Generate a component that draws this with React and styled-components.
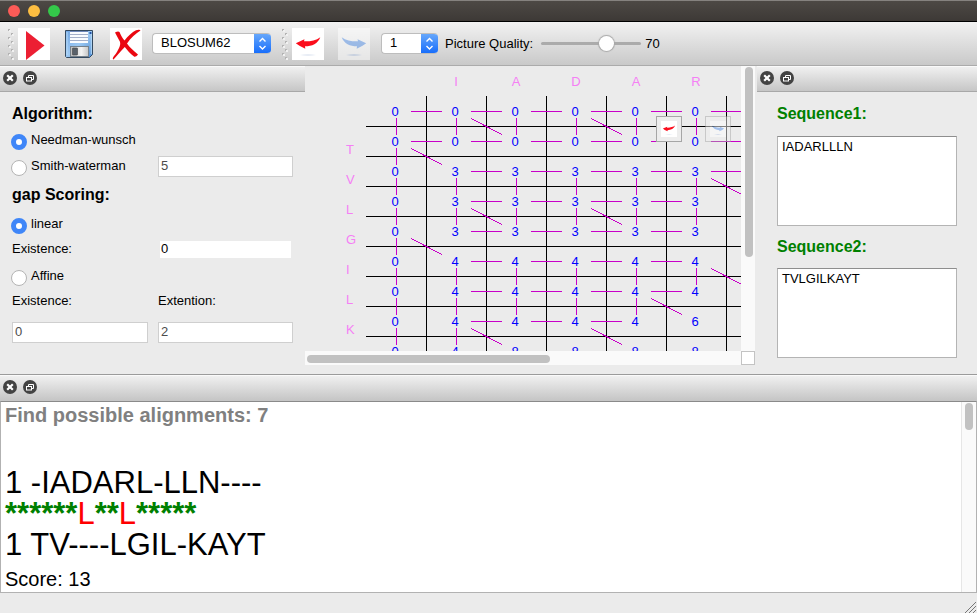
import React from "react";
import styled, { createGlobalStyle, css } from "styled-components";

const Global = createGlobalStyle`
  * { box-sizing: border-box; }
  body {
    margin: 0;
    background: #ebebeb;
    color: #000;
    font: 13px/16px "Liberation Sans", Arial, Helvetica, sans-serif;
  }
  button, input, select, textarea { font: inherit; color: inherit; margin: 0; }
  h2, p { margin: 0; }
`;

const Window = styled.div`
  display: flex;
  flex-direction: column;
  min-height: 100vh;
`;

/* ---------- title bar and toolbar ---------- */

const TitleBar = styled.header`
  flex: none;
  display: flex;
  align-items: center;
  gap: 8px;
  height: 22px;
  padding: 0 8px;
  background: linear-gradient(#4d4945, #3d3936);
  border-top: 1px solid #85827f;
  border-bottom: 1px solid #000;
`;

const TrafficLight = styled.button`
  width: 12px;
  height: 12px;
  padding: 0;
  border: 0;
  border-radius: 50%;
  background: ${(p) => p.$color};
`;

const Toolbar = styled.div`
  flex: none;
  display: flex;
  align-items: center;
  height: 44px;
  padding: 0 8px;
  background: linear-gradient(#f2f2f2, #c9c9c9);
  border-bottom: 1px solid #ababab;
`;

const ToolGroup = styled.div`
  display: flex;
  align-items: center;
  gap: ${(p) => p.$gap}px;
  margin-right: ${(p) => p.$after || 0}px;
`;

const ToolButton = styled.button`
  display: block;
  width: 32px;
  height: 32px;
  padding: 0;
  border: 0;
  background: ${(p) => (p.$plain ? "transparent" : "#fff")};
  &:disabled { opacity: 0.5; }
  svg { display: block; width: 100%; height: 100%; }
`;

const GripIcon = styled.svg`
  flex: none;
  display: block;
  margin-right: 4px;
`;

const SelectBox = styled.div`
  display: flex;
  width: ${(p) => p.$width}px;
  height: 21px;
  border-radius: 4px;
  background: #fff;
  border: 1px solid #bdbdbd;
  border-right: 0;
  overflow: hidden;
  position: relative;
  margin-right: ${(p) => p.$after}px;
  select {
    appearance: none;
    width: 100%;
    border: 0;
    outline: 0;
    background: transparent;
    padding: 0 20px 2px 8px;
    line-height: 16px;
  }
  svg {
    position: absolute;
    right: 0;
    top: -1px;
    pointer-events: none;
  }
`;

const Quality = styled.label`
  display: flex;
  align-items: center;
  gap: 8px;
  white-space: nowrap;
`;

const Slider = styled.input`
  appearance: none;
  width: 100px;
  height: 18px;
  background: transparent;
  &::-webkit-slider-runnable-track {
    height: 3px;
    border-radius: 2px;
    background: #ababab;
  }
  &::-webkit-slider-thumb {
    appearance: none;
    width: 15px;
    height: 15px;
    margin-top: -6px;
    border-radius: 50%;
    background: #fff;
    box-shadow: 0 0 1px 1px #a8a8a8;
  }
`;

const QualityValue = styled.output`
  margin-left: 4px;
`;

/* ---------- docks ---------- */

const Workspace = styled.main`
  flex: none;
  display: grid;
  grid-template-columns: 305px minmax(0, 1fr) 220px;
`;

const Dock = styled.section`
  min-width: 0;
`;

const DockBar = styled.div`
  display: flex;
  align-items: center;
  gap: 6px;
  height: 26px;
  padding: 0 3px 2px;
  background: linear-gradient(#f0f0f0, #c6c6c6);
  border-top: 1px solid #fafafa;
  border-bottom: 1px solid ${(p) => (p.$flush ? "#c6c6c6" : "#a8a8a8")};
`;

const DockButton = styled.button`
  width: 14px;
  height: 14px;
  padding: 0;
  border: 0;
  background: transparent;
  svg { display: block; }
`;

const Heading = styled.h2`
  font-size: 16px;
  line-height: 20px;
  font-weight: bold;
`;

const Options = styled.form`
  display: grid;
  grid-template-columns: 136px 135px;
  grid-template-rows: 24px 28px 24px 34px 24px 26px 28px 22px 40px;
  column-gap: 10px;
  align-items: center;
  padding: 10px 12px;
  ${Heading} { grid-column: 1 / -1; }
`;

const Choice = styled.label`
  grid-column: ${(p) => (p.$wide ? "1 / -1" : "auto")};
  display: flex;
  align-items: center;
  gap: 4px;
  margin-left: -1px;
  white-space: nowrap;
`;

const Radio = styled.input`
  appearance: none;
  flex: none;
  width: 16px;
  height: 16px;
  border-radius: 50%;
  border: 1px solid #b4b4b4;
  background: #fff;
  && { margin-top: 4px; }
  &:checked {
    border: 5px solid #3f86f8;
  }
`;

const TextBox = styled.input`
  width: 100%;
  height: 21px;
  padding: 0 2px 2px;
  border: 1px solid #cfcfcf;
  border-radius: 0;
  background: #fff;
  outline: 0;
  &:disabled { color: #4c4c4c; }
  ${(p) =>
    p.$frameless &&
    css`
      border: 0;
      height: 17px;
      width: 131px;
      margin-left: 2px;
      padding: 0 1px 1px;
    `}
`;

const Sequences = styled.div`
  display: grid;
  grid-template-rows: 44px 90px 42px 90px;
  align-items: center;
  padding: 0 20px 16px;
`;

const SequenceLabel = styled.label`
  font-size: 16px;
  line-height: 20px;
  font-weight: bold;
  color: #008000;
`;

const SequenceText = styled.textarea`
  display: block;
  width: 100%;
  height: 90px;
  padding: 2px 4px;
  border: 1px solid #b4b4b4;
  border-top-color: #8e8e8e;
  border-radius: 0;
  resize: none;
  outline: 0;
  background: #fff;
`;

/* ---------- matrix view ---------- */

const MatrixArea = styled.section`
  position: relative;
  display: grid;
  grid-template-columns: minmax(0, 1fr) 14px;
  grid-template-rows: minmax(0, 1fr) 14px;
  padding: 0 2px 9px 0;
`;

const MatrixView = styled.div`
  min-width: 0;
  min-height: 0;
  overflow: hidden;
  contain: size;
  svg { display: block; }
`;

const ScrollTrack = styled.div`
  background: #fafafa;
  padding: ${(p) => (p.$vertical ? "1px 2px 0 4px" : "4px 0 2px 2px")};
`;

const ScrollThumb = styled.div`
  border-radius: 4px;
  background: #c1c1c1;
  width: ${(p) => (p.$vertical ? "8px" : p.$length)};
  height: ${(p) => (p.$vertical ? p.$length : "8px")};
`;

const ScrollCorner = styled.div`
  background: #fff;
  border: 1px solid #c3c3c3;
`;

const FloatingTools = styled.div`
  position: absolute;
  top: 50px;
  right: 26px;
  display: flex;
  gap: 23px;
`;

const FloatingButton = styled.button`
  width: 26px;
  height: 26px;
  padding: 4px;
  border: 1px solid #a6a6a6;
  background: #ededed;
  &:disabled { opacity: 0.5; }
  svg { display: block; width: 16px; height: 16px; background: #fff; }
`;

const GridLines = styled.g`
  stroke: #000;
  shape-rendering: crispEdges;
`;

const Links = styled.g`
  stroke: #c800c8;
  shape-rendering: crispEdges;
`;

const Score = styled.text`
  fill: #0000ff;
  font-size: 13px;
  text-anchor: middle;
`;

const Residue = styled.text`
  fill: #f57ff5;
  font-size: 13px;
  text-anchor: ${(p) => (p.$centered ? "middle" : "start")};
`;

/* ---------- results ---------- */

const Results = styled.section`
  flex: 1;
  display: flex;
  flex-direction: column;
  border-top: 1px solid #9b9b9b;
`;

const Log = styled.div`
  flex: 1;
  display: flex;
  border: 1px solid #b2b2b2;
  border-top-color: #8a8a8a;
  background: #fff;
`;

const LogText = styled.div`
  flex: 1;
  padding-left: 4px;
`;

const LogTitle = styled.h2`
  font-size: 20px;
  line-height: 26px;
  color: #808080;
  margin-bottom: 39px;
`;

const Alignment = styled.p`
  font-size: 31px;
  line-height: 31px;
  white-space: pre;
`;

const Gap = styled.b`
  color: #008000;
`;

const Match = styled.span`
  color: #f00;
`;

const ScoreLine = styled.p`
  margin-top: 6px;
  font-size: 20px;
  line-height: 26px;
`;

const LogScroll = styled.div`
  width: 15px;
  padding: 1px 3px;
  background: #fafafa;
  border-left: 1px solid #e6e6e6;
`;

const StatusBar = styled.footer`
  flex: none;
  display: flex;
  justify-content: flex-end;
  align-items: flex-end;
  height: 20px;
  svg { display: block; }
`;

/* ---------- icons ---------- */

const Grip = () => (
  <GripIcon width="6" height="32" aria-hidden="true">
    {[1, 5, 9, 13, 17, 21, 25, 29].map((y, i) => (
      <g key={y}>
        <rect x={i % 2 ? 3 : 0} y={y} width="2" height="2" fill="#b3b3b3" />
        <rect x={i % 2 ? 4 : 1} y={y + 1} width="2" height="2" fill="#f1f1f1" />
      </g>
    ))}
  </GripIcon>
);

const PlayIcon = () => (
  <svg viewBox="0 0 32 32" aria-hidden="true">
    <path d="M8 3 26.500 17.500 8 32Z" fill="#ec1f33" />
  </svg>
);

const SaveIcon = () => (
  <svg viewBox="0 0 32 32" aria-hidden="true">
    <defs>
      <linearGradient id="disk" x1="0" y1="0" x2="1" y2="1">
        <stop offset="0" stopColor="#6fa5e4" />
        <stop offset=".5" stopColor="#9cc8f2" />
        <stop offset="1" stopColor="#4a8ad3" />
      </linearGradient>
      <linearGradient id="shutter" x1="0" y1="0" x2="1" y2="0">
        <stop offset="0" stopColor="#bdbdbd" />
        <stop offset=".6" stopColor="#f4f4f4" />
        <stop offset="1" stopColor="#c6c6c6" />
      </linearGradient>
    </defs>
    <path d="M1.500 2.500h27v24l-3 3h-23l-1-1Z" fill="url(#disk)" stroke="#34495f" />
    <path d="M3 4v23M27.300 4v22" stroke="#b9dcf8" />
    <rect x="6" y="3" width="18" height="12" fill="#fafcff" />
    <path d="M6 6.500h18M6 9.500h18M6 12.500h18" stroke="#a5b0ca" />
    <path d="M6 3.500h18" stroke="#7189bb" />
    <rect x="6.500" y="18.500" width="18" height="10" fill="url(#shutter)" stroke="#75818c" />
    <rect x="8.500" y="20" width="5" height="7" rx=".5" fill="#59616a" stroke="#444" strokeWidth=".6" />
    <rect x="25.500" y="4" width="2" height="2" fill="#2352a5" />
  </svg>
);

const DeleteIcon = () => (
  <svg viewBox="0 0 32 32" aria-hidden="true">
    <path
      d="M5 4.500C7 3.500 8.500 3 9.500 4 11 7.500 12.500 10.500 14.500 12.500 18 8 22 4 26 2.200 28 1.400 30 1.400 30.500 2.500 26 5.500 20.500 10 17 15.500 19.500 19 23 22.500 28 26.500 26.500 28.500 25 29 24 28.500 20 25.500 17.500 22.500 14.800 19 11 23 7 27.500 3.500 31.500 2.200 30.600 2.600 29.800 6 25.500 9 20.500 12 15.500 9 12 6.500 8.500 5 4.500Z"
      fill="#ea0710"
    />
  </svg>
);

const SWOOSH = "M3.800 15.200 12.500 11.300 12 13.300C18 13.500 24 12.500 28.300 9.200 26 15.500 20 18.300 13 18.300L13.300 20.700 7.500 17.800Z";

const UndoIcon = () => (
  <svg viewBox="0 0 32 32" aria-hidden="true">
    <path d={SWOOSH} fill="#fb0d1c" />
    <path d="M8 27Q16 25.500 24 27Q16 28.500 8 27Z" fill="#dfe6f2" />
  </svg>
);

const RedoIcon = () => (
  <svg viewBox="0 0 32 32" aria-hidden="true">
    <g transform="matrix(-1 0 0 1 32 0)">
      <path d={SWOOSH} fill="#5b97ee" />
    </g>
    <path d="M8 27Q16 25.500 24 27Q16 28.500 8 27Z" fill="#a9bfe6" />
  </svg>
);

const Stepper = () => (
  <svg width="17" height="21" aria-hidden="true">
    <defs>
      <linearGradient id="stepper" x1="0" y1="0" x2="0" y2="1">
        <stop offset="0" stopColor="#6aaafb" />
        <stop offset="1" stopColor="#146bfb" />
      </linearGradient>
    </defs>
    <rect width="17" height="21" fill="url(#stepper)" />
    <path d="M5.500 8.500 8.500 5.500l3 3M5.500 13l3 3 3-3" fill="none" stroke="#fff" strokeWidth="1.400" />
  </svg>
);

const CloseIcon = () => (
  <svg width="14" height="14" aria-hidden="true">
    <circle cx="7" cy="7" r="7" fill="#434343" />
    <path d="M4.200 4.200 9.800 9.800M9.800 4.200 4.200 9.800" stroke="#fff" strokeWidth="2.200" />
  </svg>
);

const FloatIcon = () => (
  <svg width="14" height="14" aria-hidden="true">
    <circle cx="7" cy="7" r="7" fill="#434343" />
    <path d="M5.500 6V4.500h5v4H9" fill="none" stroke="#fff" />
    <rect x="3.500" y="6.500" width="5" height="3.500" fill="#434343" stroke="#fff" />
  </svg>
);

/* ---------- matrix data ---------- */

const TOP = ["I", "A", "D", "A", "R"];
const SIDE = ["T", "V", "L", "G", "I", "L", "K"];

const SCORES = [
  [0, 0, 0, 0, 0, 0],
  [0, 0, 0, 0, 0, 0],
  [0, 3, 3, 3, 3, 3],
  [0, 3, 3, 3, 3, 3],
  [0, 3, 3, 3, 3, 3],
  [0, 4, 4, 4, 4, 4],
  [0, 4, 4, 4, 4, 4],
  [0, 4, 4, 4, 4, 6],
  [0, 4, 8, 8, 8, 8],
];

/* For each row: the columns whose cell links right, down and diagonally. */
const LINKS = [
  { right: [0, 1, 2, 3, 4, 5], down: [0, 1, 2, 3, 4, 5], diagonal: [1, 3] },
  { right: [0, 1, 2, 3, 4, 5], down: [0], diagonal: [0] },
  { right: [1, 2, 3, 4, 5], down: [0, 1, 2, 3, 4, 5], diagonal: [5] },
  { right: [1, 2, 3, 4], down: [0, 1, 2, 3, 4, 5], diagonal: [1, 3] },
  { right: [1, 2, 3, 4], down: [0], diagonal: [0] },
  { right: [1, 2, 3, 4], down: [0, 1, 2, 3, 4, 5], diagonal: [5] },
  { right: [1, 2, 3, 4], down: [0, 1, 2, 3, 4], diagonal: [4] },
  { right: [1, 2, 3], down: [0, 1], diagonal: [1, 3] },
];

const CELL_W = 60;
const CELL_H = 30;

const Matrix = () => (
  <svg width="1200" height="320" role="img" aria-label="Scoring matrix">
    <GridLines>
      {[0, 1, 2, 3, 4, 5].map((c) => (
        <path key={c} d={`M${121.5 + c * CELL_W} 30V320`} />
      ))}
      {SCORES.slice(1).map((_, r) => (
        <path key={r} d={`M61 ${60.5 + r * CELL_H}H1200`} />
      ))}
    </GridLines>
    <Links>
      {LINKS.map((row, r) => {
        const y = r * CELL_H;
        return (
          <g key={r}>
            {row.right.map((c) => (
              <path key={`r${c}`} d={`M${106 + c * CELL_W} ${45.5 + y}h31`} />
            ))}
            {row.down.map((c) => (
              <path key={`d${c}`} d={`M${91.5 + c * CELL_W} ${52 + y}v17`} />
            ))}
            {row.diagonal.map((c) => (
              <path key={`x${c}`} d={`M${106 + c * CELL_W} ${52.5 + y}l31 16`} />
            ))}
          </g>
        );
      })}
    </Links>
    {TOP.map((t, c) => (
      <Residue key={c} $centered x={151 + c * CELL_W} y="20">{t}</Residue>
    ))}
    {SIDE.map((t, r) => (
      <Residue key={r} x="41" y={88 + r * CELL_H}>{t}</Residue>
    ))}
    {SCORES.map((row, r) =>
      row.map((v, c) => (
        <Score key={`${r}-${c}`} x={90 + c * CELL_W} y={50 + r * CELL_H}>{v}</Score>
      ))
    )}
  </svg>
);

const DockHeader = ({ flush }) => (
  <DockBar $flush={flush}>
    <DockButton type="button" aria-label="Close panel"><CloseIcon /></DockButton>
    <DockButton type="button" aria-label="Float panel"><FloatIcon /></DockButton>
  </DockBar>
);

export default function App() {
  return (
    <Window>
      <Global />
      <TitleBar>
        <TrafficLight type="button" aria-label="Close" $color="#fc5b57" />
        <TrafficLight type="button" aria-label="Minimize" $color="#fdbe41" />
        <TrafficLight type="button" aria-label="Zoom" $color="#34c84a" />
      </TitleBar>

      <Toolbar>
        <Grip />
        <ToolGroup $gap={14} $after={10}>
          <ToolButton type="button" aria-label="Run"><PlayIcon /></ToolButton>
          <ToolButton type="button" aria-label="Save" $plain><SaveIcon /></ToolButton>
          <ToolButton type="button" aria-label="Clear"><DeleteIcon /></ToolButton>
        </ToolGroup>
        <SelectBox $width={119} $after={11}>
          <select aria-label="Scoring matrix" defaultValue="BLOSUM62">
            <option>BLOSUM62</option>
          </select>
          <Stepper />
        </SelectBox>
        <Grip />
        <ToolGroup $gap={14} $after={11}>
          <ToolButton type="button" aria-label="Previous"><UndoIcon /></ToolButton>
          <ToolButton type="button" aria-label="Next" disabled><RedoIcon /></ToolButton>
        </ToolGroup>
        <SelectBox $width={57} $after={7}>
          <select aria-label="Alignment number" defaultValue="1">
            <option>1</option>
          </select>
          <Stepper />
        </SelectBox>
        <Quality>
          Picture Quality:
          <Slider id="quality" type="range" min="0" max="100" defaultValue="68" />
        </Quality>
        <QualityValue htmlFor="quality">70</QualityValue>
      </Toolbar>

      <Workspace>
        <Dock>
          <DockHeader />
          <Options>
            <Heading>Algorithm:</Heading>
            <Choice $wide>
              <Radio type="radio" name="algorithm" defaultChecked />
              Needman-wunsch
            </Choice>
            <Choice>
              <Radio type="radio" name="algorithm" />
              Smith-waterman
            </Choice>
            <TextBox aria-label="Smith-waterman threshold" defaultValue="5" disabled />
            <Heading>gap Scoring:</Heading>
            <Choice $wide>
              <Radio type="radio" name="gap" defaultChecked />
              linear
            </Choice>
            <label htmlFor="linear-existence">Existence:</label>
            <TextBox id="linear-existence" defaultValue="0" $frameless />
            <Choice $wide>
              <Radio type="radio" name="gap" />
              Affine
            </Choice>
            <label htmlFor="affine-existence">Existence:</label>
            <label htmlFor="affine-extension">Extention:</label>
            <TextBox id="affine-existence" defaultValue="0" disabled />
            <TextBox id="affine-extension" defaultValue="2" disabled />
          </Options>
        </Dock>

        <MatrixArea>
          <MatrixView><Matrix /></MatrixView>
          <ScrollTrack $vertical><ScrollThumb $vertical $length="67%" /></ScrollTrack>
          <ScrollTrack><ScrollThumb $length="56%" /></ScrollTrack>
          <ScrollCorner />
          <FloatingTools>
            <FloatingButton type="button" aria-label="Previous path"><UndoIcon /></FloatingButton>
            <FloatingButton type="button" aria-label="Next path" disabled><RedoIcon /></FloatingButton>
          </FloatingTools>
        </MatrixArea>

        <Dock>
          <DockHeader />
          <Sequences>
            <SequenceLabel htmlFor="sequence-1">Sequence1:</SequenceLabel>
            <SequenceText id="sequence-1" defaultValue="IADARLLLN" spellCheck={false} />
            <SequenceLabel htmlFor="sequence-2">Sequence2:</SequenceLabel>
            <SequenceText id="sequence-2" defaultValue="TVLGILKAYT" spellCheck={false} />
          </Sequences>
        </Dock>
      </Workspace>

      <Results>
        <DockHeader flush />
        <Log>
          <LogText>
            <LogTitle>Find possible alignments: 7</LogTitle>
            <Alignment>1 -IADARL-LLN----</Alignment>
            <Alignment>
              <Gap>******</Gap><Match>L</Match><Gap>**</Gap><Match>L</Match><Gap>*****</Gap>
            </Alignment>
            <Alignment>1 TV----LGIL-KAYT</Alignment>
            <ScoreLine>Score: 13</ScoreLine>
          </LogText>
          <LogScroll><ScrollThumb $vertical $length="27px" /></LogScroll>
        </Log>
      </Results>

      <StatusBar>
        <svg width="12" height="12" aria-hidden="true">
          <path d="M0 12 11 1M4 12l7-7M8 12l3-3" stroke="#777" />
        </svg>
      </StatusBar>
    </Window>
  );
}
